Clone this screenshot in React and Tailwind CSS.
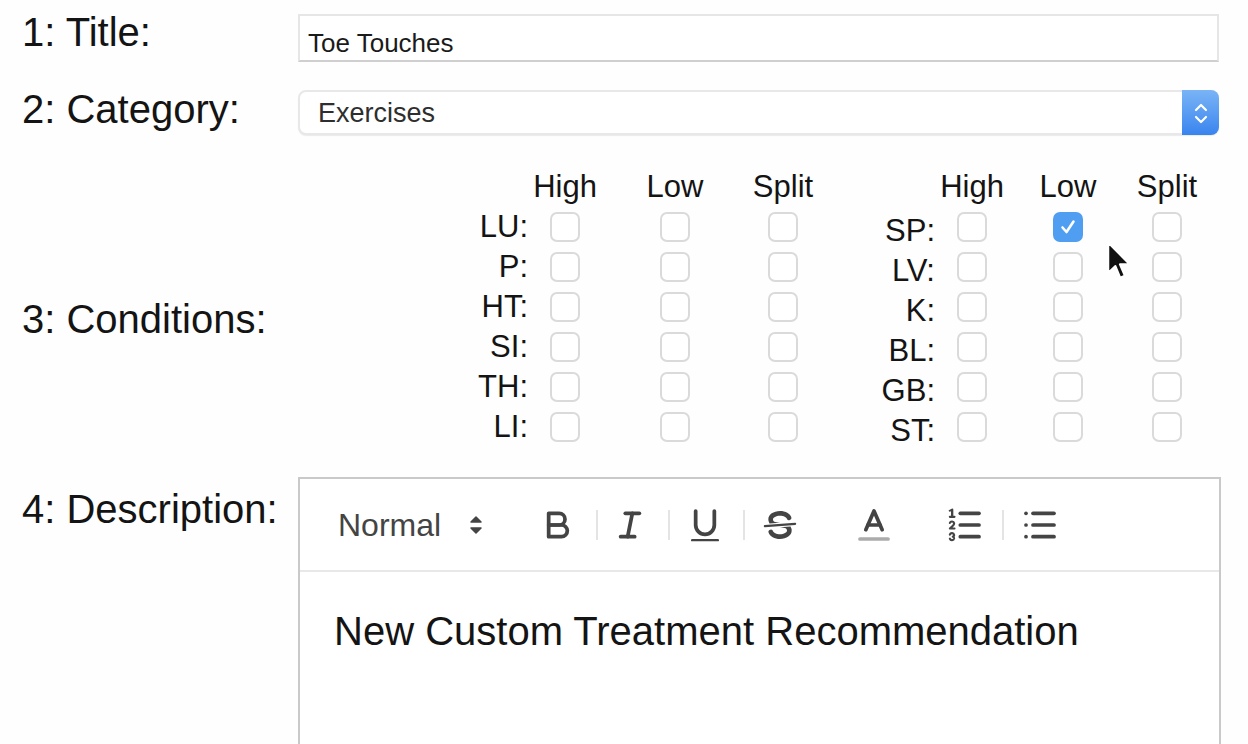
import React from 'react';

const sans = "font-['Liberation_Sans',Arial,sans-serif]";

const leftRows = ['LU:', 'P:', 'HT:', 'SI:', 'TH:', 'LI:'];
const rightRows = ['SP:', 'LV:', 'K:', 'BL:', 'GB:', 'ST:'];

// shared svg stroke attributes for the editor toolbar icons
const line = { fill: 'none', stroke: '#444', strokeWidth: 1.6, strokeLinecap: 'round', strokeLinejoin: 'round' };
const thin = { ...line, strokeWidth: 0.9 };

const Icon = ({ children }) => (
  <svg width="42" height="42" viewBox="0 0 18 18">{children}</svg>
);

const Box = ({ checked }) =>
  checked ? (
    <div className="w-[30px] h-[30px] rounded-[7px] bg-[#4f9ef2] flex items-center justify-center">
      <svg width="20" height="20" viewBox="0 0 20 20">
        <path d="M4.5 10.5 L8.5 15 L15.5 4.5" fill="none" stroke="#fff" strokeWidth="2.6" strokeLinecap="round" strokeLinejoin="round" />
      </svg>
    </div>
  ) : (
    <div className="w-[30px] h-[30px] rounded-[7px] border-2 border-[#dadada] bg-white" />
  );

const Table = ({ rows, gaps, checked, lowLabels }) => (
  <div className="flex flex-col">
    <div className="flex h-[36px] pl-[60px]">
      {['High', 'Low', 'Split'].map((h, i) => (
        <div key={h} className={`w-[30px] flex justify-center whitespace-nowrap text-[31px] leading-[36px] ${gaps[i]}`}>
          {h}
        </div>
      ))}
    </div>
    <div className="flex flex-col gap-[10px] mt-[7px]">
      {rows.map((r, ri) => (
        <div key={r} className="flex h-[30px]">
          <div className={`w-[60px] h-[30px] text-right text-[31px] ${lowLabels ? 'leading-[38px]' : 'leading-[30px]'}`}>{r}</div>
          {[0, 1, 2].map(c => (
            <div key={c} className={gaps[c]}>
              <Box checked={checked && checked[0] === ri && checked[1] === c} />
            </div>
          ))}
        </div>
      ))}
    </div>
  </div>
);

const Sep = ({ className }) => <div className={`w-[2px] h-[30px] bg-[#e4e4e4] ${className}`} />;

const App = () => {
  return (
    <div className={`relative w-[1248px] h-[744px] overflow-hidden bg-[#fefefe] text-[#141414] ${sans}`}>
      <div className="pl-[22px] pt-[10px]">
        <div className="flex items-start">
          <div className="w-[276px] text-[40px] leading-[44px]">1: Title:</div>
          <div className="mt-[4px] w-[921px] h-[48px] border-2 border-[#e6e6e6] border-b-[#cfcfcf] bg-white pl-[8px] pt-[14px] text-[26px] leading-[26px] text-[#1a1a1a]">
            Toe Touches
          </div>
        </div>

        <div className="flex items-start mt-[25px]">
          <div className="w-[276px] text-[40px] leading-[44px]">2: Category:</div>
          <div className="mt-[3px] w-[921px] h-[45px] flex rounded-[8px] border-2 border-[#e8e8e8] bg-white shadow-[0_1px_1px_rgba(0,0,0,0.08)]">
            <div className="flex-1 pl-[18px] pt-[8px] text-[27px] leading-[27px] text-[#2e2e2e]">Exercises</div>
            <div className="w-[37px] -my-[2px] -mr-[2px] rounded-r-[8px] bg-gradient-to-b from-[#7ab4f6] to-[#3884ee] flex items-center justify-center">
              <svg width="16" height="30" viewBox="0 0 16 30">
                <path d="M3 12 L8 7 L13 12" fill="none" stroke="#fff" strokeWidth="2.2" strokeLinecap="round" strokeLinejoin="round" />
                <path d="M3 19 L8 24 L13 19" fill="none" stroke="#fff" strokeWidth="2.2" strokeLinecap="round" strokeLinejoin="round" />
              </svg>
            </div>
          </div>
        </div>

        <div className="flex items-start mt-[34px]">
          <div className="w-[276px] mt-[128px] text-[40px] leading-[44px]">3: Conditions:</div>
          <div className="flex ml-[170px]">
            <Table rows={leftRows} gaps={['ml-[22px]', 'ml-[80px]', 'ml-[78px]']} />
            <div className="ml-[77px]">
              <Table rows={rightRows} gaps={['ml-[22px]', 'ml-[66px]', 'ml-[69px]']} checked={[0, 1]} lowLabels />
            </div>
          </div>
        </div>

        <div className="flex items-start mt-[35px]">
          <div className="w-[276px] mt-[10px] text-[40px] leading-[44px]">4: Description:</div>
          <div className="w-[923px] h-[300px] border-2 border-[#c9c9c9] bg-white">
            <div className="h-[93px] border-b-2 border-[#e8e8e8] flex items-center pl-[38px] text-[#444]">
              <div className="w-[146px] flex items-center justify-between">
                <span className="text-[32px] leading-[36px]">Normal</span>
                <svg width="16" height="22" viewBox="0 0 16 22">
                  <path d="M3 8 L8 3 L13 8 Z" fill="#444" stroke="#444" strokeWidth="1.5" strokeLinejoin="round" />
                  <path d="M3 14 L8 19 L13 14 Z" fill="#444" stroke="#444" strokeWidth="1.5" strokeLinejoin="round" />
                </svg>
              </div>
              <div className="ml-[53px]">
                <Icon>
                  <path {...line} d="M5,4H9.5A2.5,2.5,0,0,1,12,6.5v0A2.5,2.5,0,0,1,9.5,9H5V4Z" />
                  <path {...line} d="M5,9h5.5A2.5,2.5,0,0,1,13,11.5v0A2.5,2.5,0,0,1,10.5,14H5V9Z" />
                </Icon>
              </div>
              <Sep className="ml-[17px]" />
              <div className="ml-[11px]">
                <Icon>
                  <line {...line} x1="7" x2="13" y1="4" y2="4" />
                  <line {...line} x1="5" x2="11" y1="14" y2="14" />
                  <line {...line} x1="8" x2="10" y1="14" y2="4" />
                </Icon>
              </div>
              <Sep className="ml-[17px]" />
              <div className="ml-[14px]">
                <Icon>
                  <path {...line} d="M5,3V9a4.012,4.012,0,0,0,4,4H9a4.012,4.012,0,0,0,4-4V3" />
                  <rect fill="#444" height="1" rx="0.5" ry="0.5" width="12" x="3" y="15" />
                </Icon>
              </div>
              <Sep className="ml-[17px]" />
              <div className="ml-[14px]">
                <Icon>
                  <line {...thin} x1="15.5" x2="2.5" y1="8.5" y2="9.5" />
                  <path fill="#444" d="M9.007,8C6.542,7.791,6,7.519,6,6.5,6,5.792,7.283,5,9,5c1.571,0,2.765.679,2.969,1.309a1,1,0,0,0,1.9-.617C13.356,4.106,11.354,3,9,3,6.2,3,4,4.538,4,6.5a3.2,3.2,0,0,0,.5,1.843Z" />
                  <path fill="#444" d="M8.984,10C11.457,10.208,12,10.479,12,11.5c0,0.708-1.283,1.5-3,1.5-1.571,0-2.765-.679-2.969-1.309a1,1,0,1,0-1.9.617C4.644,13.894,6.646,15,9,15c2.8,0,5-1.538,5-3.5a3.2,3.2,0,0,0-.5-1.843Z" />
                </Icon>
              </div>
              <div className="ml-[52px]">
                <Icon>
                  <line {...line} opacity="0.45" x1="3" x2="15" y1="15" y2="15" />
                  <polyline {...line} points="5.5 11 9 3 12.5 11" />
                  <line {...line} x1="11.63" x2="6.38" y1="9" y2="9" />
                </Icon>
              </div>
              <div className="ml-[49px]">
                <Icon>
                  <line {...line} x1="7" x2="15" y1="4" y2="4" />
                  <line {...line} x1="7" x2="15" y1="9" y2="9" />
                  <line {...line} x1="7" x2="15" y1="14" y2="14" />
                  <line {...thin} x1="2.5" x2="4.5" y1="5.5" y2="5.5" />
                  <path fill="#444" d="M3.5,6A0.5,0.5,0,0,1,3,5.5V3.085l-0.276.138A0.5,0.5,0,0,1,2.053,3c-0.124-.247-0.023-0.324.224-0.447l1-.5A0.5,0.5,0,0,1,4,2.5v3A0.5,0.5,0,0,1,3.5,6Z" />
                  <path {...thin} d="M4.5,10.5h-2c0-.234,1.85-1.076,1.85-2.234A0.959,0.959,0,0,0,2.5,8.156" />
                  <path {...thin} d="M2.5,14.846a0.959,0.959,0,0,0,1.850-.109A0.7,0.7,0,0,0,3.75,14a0.688,0.688,0,0,0,.6-0.736,0.959,0.959,0,0,0-1.85-.109" />
                </Icon>
              </div>
              <Sep className="ml-[16px]" />
              <div className="ml-[15px]">
                <Icon>
                  <line {...line} x1="6" x2="15" y1="4" y2="4" />
                  <line {...line} x1="6" x2="15" y1="9" y2="9" />
                  <line {...line} x1="6" x2="15" y1="14" y2="14" />
                  <line {...line} x1="3" x2="3" y1="4" y2="4" />
                  <line {...line} x1="3" x2="3" y1="9" y2="9" />
                  <line {...line} x1="3" x2="3" y1="14" y2="14" />
                </Icon>
              </div>
            </div>
            <div className="pl-[34px] pt-[35px] text-[40px] leading-[48px] text-[#141414]">
              New Custom Treatment Recommendation
            </div>
          </div>
        </div>
      </div>

      {/* mouse pointer over the grid */}
      <svg className="absolute left-[1106px] top-[241px]" width="27" height="41" viewBox="0 0 14 22">
        <path d="M1,1 L1,17 L4.8,13.4 L7.4,19.6 L9.8,18.6 L7.2,12.5 L12.4,12.5 Z" fill="#111" stroke="#fff" strokeWidth="1" strokeLinejoin="round" />
      </svg>
    </div>
  );
};

export default App;
